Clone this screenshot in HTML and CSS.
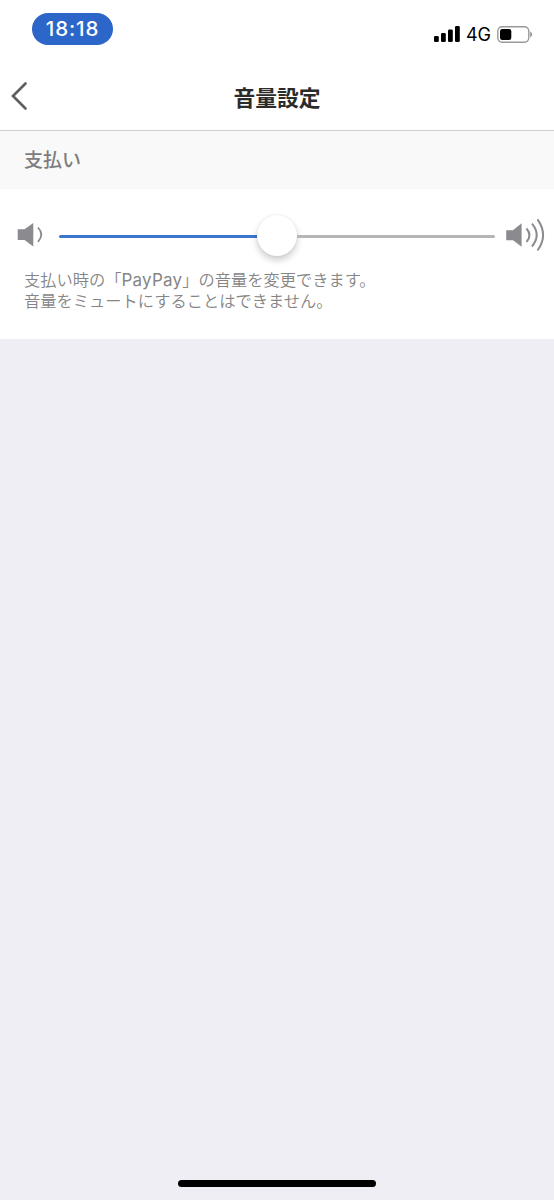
FILE: index.html
```html
<!DOCTYPE html>
<html lang="ja">
<head>
<meta charset="utf-8">
<title>音量設定</title>
<link rel="stylesheet" href="styles.css">
</head>
<body>
<div class="screen">
  <div class="status">
    <span class="time">18:18</span>
    <div class="indicators">
      <svg class="signal" width="26" height="16" viewBox="0 0 26 16"><rect x="0" y="10" width="4.8" height="6" rx="1.3"/><rect x="7" y="7" width="4.8" height="9" rx="1.3"/><rect x="14" y="3.6" width="4.8" height="12.4" rx="1.3"/><rect x="21" y="0" width="4.8" height="16" rx="1.3"/></svg>
      <span class="network">4G</span>
      <svg class="battery" width="36" height="17" viewBox="0 0 36 17"><rect x=".8" y=".8" width="31" height="15.4" rx="4.4" fill="none" stroke="#999" stroke-width="1.4"/><rect x="3" y="3" width="11.3" height="11" rx="2.3"/><path d="M33.4 5.3q3 3.2 0 6.2z" fill="#777"/></svg>
    </div>
  </div>
  <header class="nav">
    <svg class="back" width="18" height="30" viewBox="0 0 18 30"><path d="M15.5 2.5L3 15l12.5 12.5" fill="none" stroke="#606060" stroke-width="2.7" stroke-linecap="round"/></svg>
    <h1 class="title">音量設定</h1>
  </header>
  <h2 class="section">支払い</h2>
  <main class="panel">
    <div class="volume">
      <svg class="low" width="28" height="34" viewBox="0 0 28 34"><path d="M1.7 11.2h6.8L17.3 5v23.5L8.5 22H1.7z" fill="#8b8b8f"/><path d="M22 9.5q6.6 7 0 14.3" fill="none" stroke="#8b8b8f" stroke-width="1.8"/></svg>
      <div class="slider"><span class="filled"></span><span class="knob"></span><span class="rest"></span></div>
      <svg class="high" width="42" height="34" viewBox="0 0 42 34"><path d="M2.2 12.3h6.8l8.6-7v23.5l-8.6-6.5H2.2z" fill="#8b8b8f"/><g fill="none" stroke="#8b8b8f" stroke-width="2"><path d="M22.5 10.5q6 7 0 13.4"/><path d="M28 5.7q9.4 11.3 0 22.8"/><path d="M33.5 1.3q11.2 15.7 0 31.2"/></g></svg>
    </div>
    <p class="note">支払い時の「<span class="latin">PayPay</span>」の音量を変更できます。<br>音量をミュートにすることはできません。</p>
  </main>
  <footer class="bottom"><span class="home"></span></footer>
</div>
</body>
</html>
```
FILE: styles.css
```css
* { box-sizing: border-box; }
body { margin: 0; font-family: Inter, "Noto Sans CJK JP", sans-serif; }
.screen { width: 554px; height: 1200px; display: flex; flex-direction: column; background: #efeef4; }
.status { height: 66px; background: #fff; display: flex; justify-content: space-between; align-items: flex-start; padding: 13px 21px 0 32px; }
.time { width: 81px; height: 32px; border-radius: 16px; background: #2c66c9; color: #fff; font-size: 20.5px; letter-spacing: .9px; line-height: 32px; font-weight: 500; text-align: center; }
.indicators { display: flex; align-items: center; padding-top: 12px; height: 30px; }
.network { font-size: 18px; line-height: 20px; margin: 2px 6px 0 6px; }
.nav { height: 65px; background: #fff; border-bottom: 1px solid #d0d0d0; display: grid; grid-template-columns: 60px 1fr 60px; align-items: center; }
.back { margin: -5px 0 0 10px; }
.title { margin: 0; font-size: 21.8px; line-height: 32px; font-weight: 700; color: #2b2b2b; text-align: center; }
.section { margin: 0; height: 58px; padding-left: 24px; background: #f9f9f9; color: #7d7d7d; font-size: 19px; line-height: 59px; font-weight: 500; }
.panel { height: 150px; background: #fff; padding-top: 29px; }
.volume { height: 34px; display: flex; align-items: center; padding: 0 8px 0 16px; }
.slider { width: 436px; margin: 0 9px 0 15px; display: flex; align-items: center; }
.filled, .rest { flex: 1; height: 3px; margin-top: 3px; background: #3c77ce; border-radius: 2px 0 0 2px; }
.rest { background: #b5b5b5; border-radius: 0 2px 2px 0; }
.knob { width: 40px; height: 41px; border-radius: 50%; background: #fff; box-shadow: 0 4px 7px rgba(0,0,0,.2), 0 0 2px rgba(0,0,0,.1); }
.low, .high { flex: none; }
.note { margin: 18px 0 0 24px; font-size: 16.25px; line-height: 20.5px; color: #858585; font-weight: 350; white-space: nowrap; }
.latin { font-size: 17px; letter-spacing: .2px; font-weight: 400; }
.bottom { margin-top: auto; height: 20px; display: flex; justify-content: center; }
.home { width: 198px; height: 7px; border-radius: 4px; background: #000; }
```
